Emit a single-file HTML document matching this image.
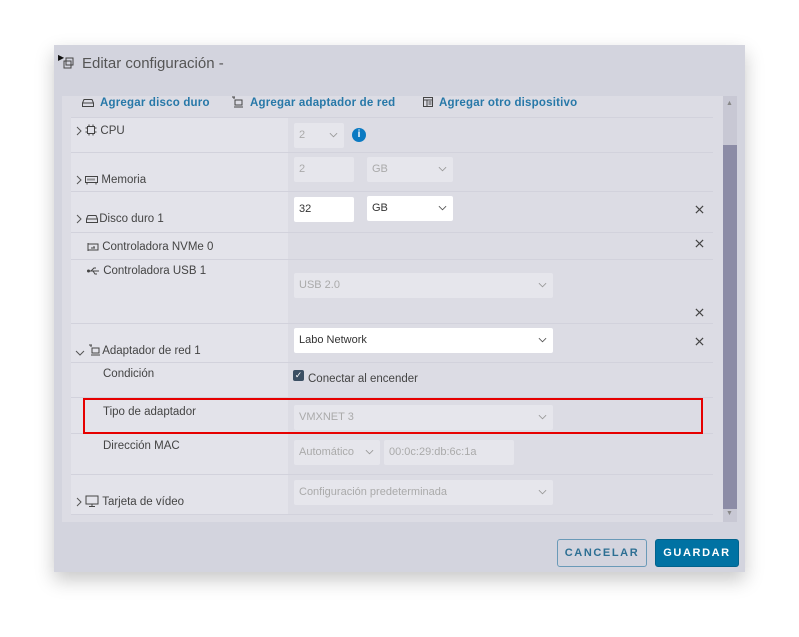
<!DOCTYPE html>
<html><head><meta charset="utf-8"><style>
*{box-sizing:border-box;margin:0;padding:0}
body{width:799px;height:637px;background:#fff;font-family:"Liberation Sans",sans-serif;position:relative;overflow:hidden;color:#444}
.dlg{position:absolute;left:54px;top:45px;width:691px;height:527px;background:#d3d4de;box-shadow:0 8px 18px rgba(0,0,0,.22)}
.a{position:absolute}
.title{left:28px;top:10px;font-size:15px;color:#555}
.panel{left:8px;top:51px;width:661px;height:426px;background:#dcdce4}
.lnk{position:absolute;top:51px;font-size:11.5px;color:#2778a8;font-weight:bold;letter-spacing:.2px;line-height:14px;white-space:nowrap}
.lnk svg{vertical-align:-2px;margin-right:5px}
.row{position:absolute;left:17px;width:642px;border-top:1px solid #d2d2dc}
.lc{position:absolute;left:17px;width:217px;background:#e3e3ea}
.lbl{position:absolute;font-size:11.5px;color:#444;white-space:nowrap;line-height:14px}
.lbl svg{vertical-align:-2px}
.inp{position:absolute;height:25px;border-radius:2px;background:#e6e6ec;font-size:11px;color:#aaa;padding:6px 5px}
.inp.w{background:#fff;color:#333}
.chev{position:absolute;right:6px;top:9px}
.x{position:absolute;left:641px}
.sb{left:669px;top:51px;width:14px;height:426px;background:#c8c8d4}
.btn{position:absolute;top:494px;height:28px;border-radius:3px;font-size:11px;font-weight:bold;letter-spacing:1.6px;text-align:center;line-height:26px}
</style></head><body>
<svg width="0" height="0" style="position:absolute"><defs>
<symbol id="cv" viewBox="0 0 10 6"><polyline points="1,1 5,5 9,1" fill="none" stroke="currentColor" stroke-width="1"/></symbol>
<symbol id="ar" viewBox="0 0 6 10"><polyline points="1,1 5,5 1,9" fill="none" stroke="#555" stroke-width="1"/></symbol>
<symbol id="ad" viewBox="0 0 10 6"><polyline points="1,1 5,5 9,1" fill="none" stroke="#555" stroke-width="1"/></symbol>
<symbol id="xx" viewBox="0 0 10 10"><path d="M1,1L9,9M9,1L1,9" stroke="#444" stroke-width="1.3"/></symbol>
<symbol id="hd" viewBox="0 0 14 10"><path d="M1.5,5 L3,1.5 H11 L12.5,5 V8.5 H1.5 Z M1.5,5 H12.5" fill="none" stroke="#444"/></symbol>
<symbol id="net" viewBox="0 0 14 12"><path d="M1,1h3M3,1v2M4,4h7v5H4z M3,11h9" fill="none" stroke="#444"/></symbol>
</defs></svg>
<div class="dlg">
 <div class="a" style="left:4px;top:8px;font-size:8px;color:#111">▶</div>
 <svg class="a" style="left:9px;top:12px" width="12" height="12" viewBox="0 0 12 12"><path d="M3,1h7v7h-7z M1,4h7v7H1z" fill="none" stroke="#444"/></svg>
 <div class="a title">Editar configuración -</div>
 <div class="a panel"></div>
 <div class="lnk" style="left:27px"><svg width="14" height="10"><use href="#hd"/></svg>Agregar disco duro</div>
 <div class="lnk" style="left:177px"><svg width="14" height="12"><use href="#net"/></svg>Agregar adaptador de red</div>
 <div class="lnk" style="left:368px"><svg width="12" height="12" viewBox="0 0 12 12"><path d="M1.5,1.5h9v9h-9z M1.5,4h9M5,4v6.5M6.5,6h3M6.5,8h3" fill="none" stroke="#444"/></svg>Agregar otro dispositivo</div>
 <div class="lc" style="top:72px;height:397px"></div>
 <div class="row" style="top:72px"></div><div class="row" style="top:107px"></div><div class="row" style="top:146px"></div><div class="row" style="top:187px"></div><div class="row" style="top:214px"></div><div class="row" style="top:278px"></div><div class="row" style="top:317px"></div><div class="row" style="top:352px"></div><div class="row" style="top:388px"></div><div class="row" style="top:429px"></div><div class="row" style="top:469px"></div>
 <div class="lbl" style="left:22px;top:79px"><svg width="6" height="10"><use href="#ar"/></svg> <svg width="12" height="12" viewBox="0 0 12 12"><path d="M2.5,2.5h7v7h-7z M4,0.5v2M8,0.5v2M4,9.5v2M8,9.5v2M0.5,4h2M0.5,8h2M9.5,4h2M9.5,8h2" fill="none" stroke="#444"/></svg> CPU</div>
 <div class="inp" style="left:240px;top:78px;width:50px">2<svg class="chev" width="9" height="6" style="color:#999"><use href="#cv"/></svg></div>
 <div class="a" style="left:298px;top:83px;width:14px;height:14px;border-radius:7px;background:#0b7ac2;color:#fff;font-size:10px;font-weight:bold;text-align:center;line-height:14px">i</div>
 <div class="lbl" style="left:22px;top:128px"><svg width="6" height="10"><use href="#ar"/></svg> <svg width="13" height="10" viewBox="0 0 13 10"><path d="M0.5,1.5h12v6h-12z M3,3.5v2M5,3.5v2M7,3.5v2M9,3.5v2M2,7.5v2M11,7.5v2" fill="none" stroke="#444"/></svg> Memoria</div>
 <div class="inp" style="left:240px;top:112px;width:60px">2</div>
 <div class="inp" style="left:313px;top:112px;width:86px">GB<svg class="chev" width="9" height="6" style="color:#999"><use href="#cv"/></svg></div>
 <div class="lbl" style="left:22px;top:167px"><svg width="6" height="10"><use href="#ar"/></svg> <svg width="14" height="10"><use href="#hd"/></svg>Disco duro 1</div>
 <div class="inp w" style="left:240px;top:152px;width:60px">32</div>
 <div class="inp w" style="left:313px;top:151px;width:86px">GB<svg class="chev" width="9" height="6" style="color:#555"><use href="#cv"/></svg></div>
 <svg class="x" style="top:160px" width="9" height="9"><use href="#xx"/></svg>
 <div class="lbl" style="left:33px;top:195px"><svg width="12" height="10" viewBox="0 0 12 10"><path d="M1,1v8M1,2h10v6H1M4,6h4M7,4v2" fill="none" stroke="#444"/></svg> Controladora NVMe 0</div>
 <svg class="x" style="top:194px" width="9" height="9"><use href="#xx"/></svg>
 <div class="lbl" style="left:33px;top:219px"><svg width="13" height="10" viewBox="0 0 13 10"><path d="M0,5h12M4,5l3,-3h2M6,5l2,3h2" fill="none" stroke="#444"/><circle cx="1.5" cy="5" r="1.5" fill="#444"/></svg> Controladora USB 1</div>
 <div class="inp" style="left:240px;top:228px;width:259px">USB 2.0<svg class="chev" width="9" height="6" style="color:#999"><use href="#cv"/></svg></div>
 <svg class="x" style="top:263px" width="9" height="9"><use href="#xx"/></svg>
 <div class="lbl" style="left:21px;top:299px"><svg width="10" height="6"><use href="#ad"/></svg> <svg width="14" height="12"><use href="#net"/></svg>Adaptador de red 1</div>
 <div class="inp w" style="left:240px;top:283px;width:259px">Labo Network<svg class="chev" width="9" height="6" style="color:#555"><use href="#cv"/></svg></div>
 <svg class="x" style="top:292px" width="9" height="9"><use href="#xx"/></svg>
 <div class="lbl" style="left:49px;top:322px">Condición</div>
 <div class="a" style="left:239px;top:325px;width:11px;height:11px;background:#3b4f63;border-radius:2px;color:#fff;font-size:9px;line-height:11px;text-align:center">✓</div>
 <div class="lbl" style="left:254px;top:327px">Conectar al encender</div>
 <div class="lbl" style="left:49px;top:360px">Tipo de adaptador</div>
 <div class="inp" style="left:240px;top:360px;width:259px">VMXNET 3<svg class="chev" width="9" height="6" style="color:#999"><use href="#cv"/></svg></div>
 <div class="a" style="left:29px;top:353px;width:620px;height:36px;border:2px solid #e60000"></div>
 <div class="lbl" style="left:49px;top:394px">Dirección MAC</div>
 <div class="inp" style="left:240px;top:395px;width:86px">Automático<svg class="chev" width="9" height="6" style="color:#999"><use href="#cv"/></svg></div>
 <div class="inp" style="left:330px;top:395px;width:130px">00:0c:29:db:6c:1a</div>
 <div class="lbl" style="left:22px;top:450px"><svg width="6" height="10"><use href="#ar"/></svg> <svg width="14" height="12" viewBox="0 0 14 12"><path d="M1,1h12v8H1z M7,9v2M4,11.5h6" fill="none" stroke="#444"/></svg> Tarjeta de vídeo</div>
 <div class="inp" style="left:240px;top:435px;width:259px">Configuración predeterminada<svg class="chev" width="9" height="6" style="color:#999"><use href="#cv"/></svg></div>
 <div class="a sb"><div class="a" style="left:0;top:49px;width:14px;height:364px;background:#8c8ca6"></div><div class="a" style="left:3px;top:4px;font-size:7px;color:#888">▲</div><div class="a" style="left:3px;top:414px;font-size:7px;color:#888">▼</div></div>
 <div class="btn" style="left:503px;width:90px;border:1px solid #6a9ab8;color:#2d6f93">CANCELAR</div>
 <div class="btn" style="left:601px;width:84px;background:#0072a3;color:#fff;border:1px solid #00628c">GUARDAR</div>
</div>
</body></html>
